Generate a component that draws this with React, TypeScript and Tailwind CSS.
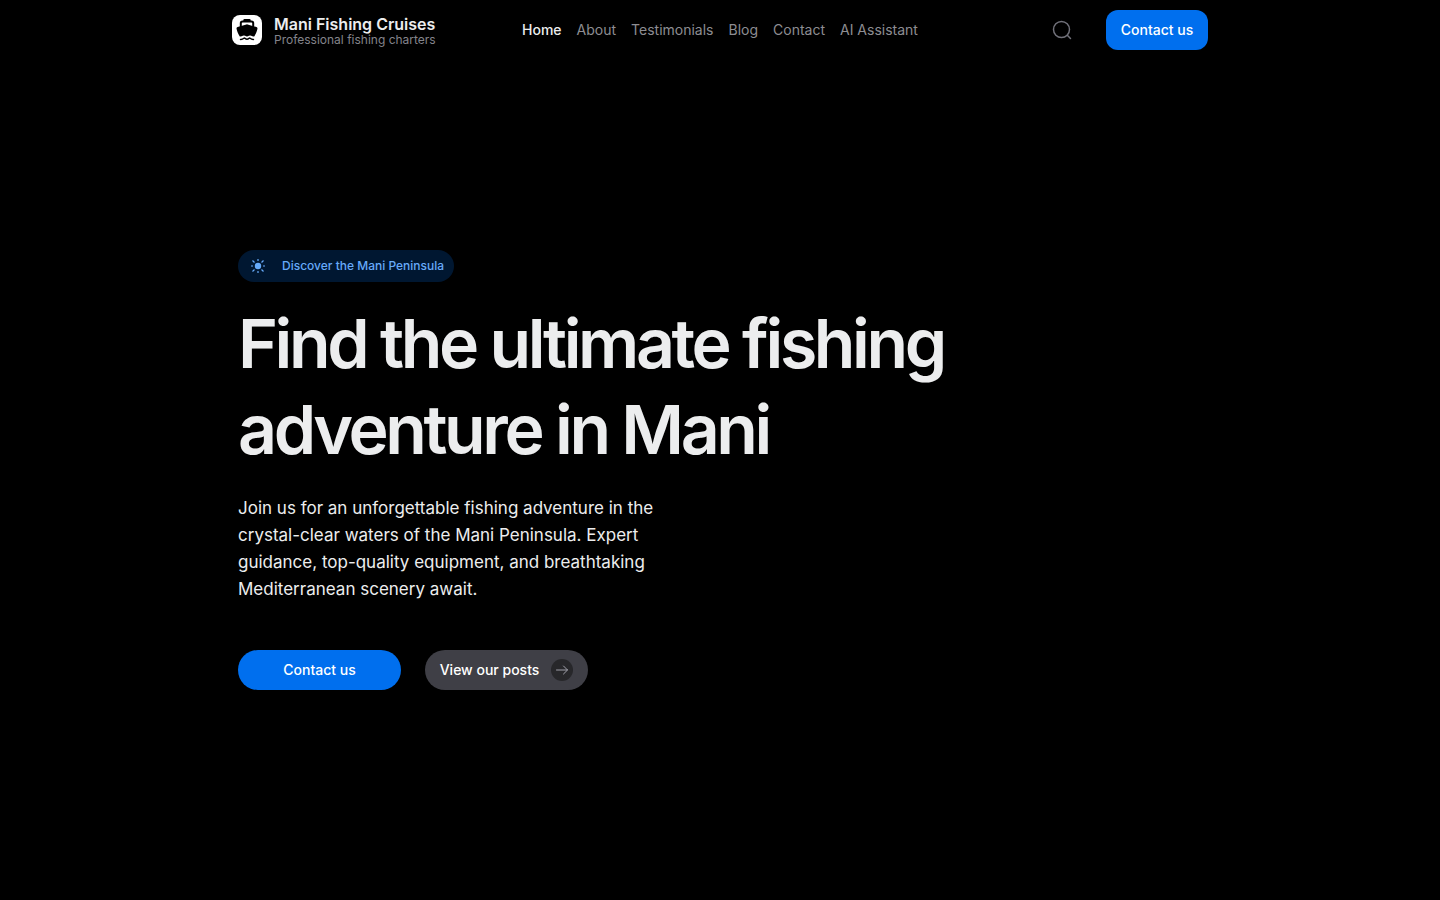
import React from 'react';

interface NavItem {
  label: string;
  href: string;
  active?: boolean;
}

const navItems: NavItem[] = [
  { label: 'Home', href: '#home', active: true },
  { label: 'About', href: '#about' },
  { label: 'Testimonials', href: '#testimonials' },
  { label: 'Blog', href: '#blog' },
  { label: 'Contact', href: '#contact' },
  { label: 'AI Assistant', href: '#assistant' },
];

function BoatIcon() {
  return (
    <svg viewBox="0 0 24 24" className="h-6 w-6" aria-hidden="true">
      {/* funnel and cabin */}
      <path d="M8.300 2.200Q8.300 1 9.500 1h5Q15.700 1 15.700 2.200V3H8.300z" fill="#000" />
      <path d="M5.800 9V5.200Q5.800 3.400 7.600 3.400h8.800Q18.200 3.400 18.200 5.200V9" fill="none" stroke="#000" strokeWidth="2" />
      {/* hull */}
      <path
        d="M11.400 6.400Q12 6.200 12.600 6.400L21.400 9.100Q22.800 9.600 22.400 11C21.800 13.800 20.600 16.400 19.200 18.500Q17.500 18.700 16.200 17.800Q15 17.100 13.900 17.800Q12 19.200 10.100 17.800Q9 17.100 7.800 17.800Q6.500 18.700 4.800 18.500C3.400 16.400 2.200 13.800 1.600 11Q1.200 9.600 2.600 9.100z"
        fill="#000"
      />
      <path
        d="M5.500 21.400Q7.500 21.500 8.800 20.300Q9.400 19.900 10 20.300Q12 22.200 14 20.300Q14.600 19.900 15.200 20.300Q16.500 21.500 18.500 21.400"
        fill="none"
        stroke="#000"
        strokeWidth="1.500"
        strokeLinecap="round"
      />
    </svg>
  );
}

function SearchIcon() {
  return (
    <svg viewBox="0 0 20 20" className="h-5 w-5" fill="none" stroke="currentColor" strokeWidth="1.5" strokeLinecap="round" aria-hidden="true">
      <circle cx="9.5" cy="9.5" r="8" />
      <path d="M15.300 15.300L18.500 18.500" />
    </svg>
  );
}

function SunIcon() {
  return (
    <svg viewBox="0 0 16 16" className="h-4 w-4" fill="none" stroke="currentColor" strokeWidth="1.2" aria-hidden="true">
      <circle cx="8" cy="8" r="3.2" fill="currentColor" stroke="none" />
      <path d="M8 1v2M8 13v2M1 8h2M13 8h2M2.500 2.500l2 2M11.500 11.500l2 2M2.500 13.500l2-2M11.500 4.500l2-2" />
    </svg>
  );
}

function ArrowIcon() {
  return (
    <svg viewBox="0 0 16 16" className="h-4 w-4" fill="none" stroke="currentColor" strokeLinecap="round" strokeLinejoin="round" aria-hidden="true">
      <path d="M2.500 8h11M9.500 4l4 4-4 4" />
    </svg>
  );
}

function Header() {
  return (
    <header className="mx-auto grid h-[60px] w-full max-w-5xl grid-cols-[1fr_auto_1fr] items-center px-6">
      <a href="#home" className="flex items-center gap-3">
        <span className="flex h-[30px] w-[30px] items-center justify-center rounded-lg bg-white">
          <BoatIcon />
        </span>
        <span className="flex flex-col">
          <span className="text-base leading-5 font-semibold text-[#ecedee]">Mani Fishing Cruises</span>
          <span className="text-xs leading-3 text-[#84848b]">Professional fishing charters</span>
        </span>
      </a>
      <nav className="flex items-center gap-[15px] text-sm">
        {navItems.map((item) => (
          <a
            key={item.label}
            href={item.href}
            className={item.active ? 'font-medium text-[#ecedee]' : 'text-[#8d8d92]'}
          >
            {item.label}
          </a>
        ))}
      </nav>
      <div className="flex items-center justify-end gap-[34px]">
        <button type="button" aria-label="Search" className="text-[#71717a]">
          <SearchIcon />
        </button>
        <button type="button" className="h-10 w-[102px] rounded-xl bg-[#006fee] text-sm font-medium text-white">
          Contact us
        </button>
      </div>
    </header>
  );
}

function Hero() {
  return (
    <main className="mx-auto flex w-full max-w-5xl flex-col items-start px-[30px] pt-[190px] pb-[210px]">
      <a href="#about" className="flex h-8 items-center gap-4 rounded-full bg-[#001731] pr-2.5 pl-3 text-xs font-medium text-[#66aaf9]">
        <SunIcon />
        Discover the Mani Peninsula
      </a>
      <h1 className="mt-[18px] max-w-3xl text-[68px] leading-[86px] font-semibold tracking-tighter text-[#ecedee]">
        Find the ultimate fishing adventure in Mani
      </h1>
      <p className="mt-[23px] max-w-md text-[17px] leading-[27px] text-[#ecedee]">
        Join us for an unforgettable fishing adventure in the crystal-clear waters of the Mani Peninsula. Expert
        guidance, top-quality equipment, and breathtaking Mediterranean scenery await.
      </p>
      <div className="mt-[47px] flex items-center gap-6">
        <button type="button" className="h-10 w-[163px] rounded-full bg-[#006fee] text-sm font-medium text-white">
          Contact us
        </button>
        <button
          type="button"
          className="flex h-10 w-[163px] items-center justify-center gap-3 rounded-full bg-[#3f3f46] text-sm font-medium text-white"
        >
          View our posts
          <span className="flex h-[22px] w-[22px] items-center justify-center rounded-full bg-[#27272a] text-[#a1a1aa]">
            <ArrowIcon />
          </span>
        </button>
      </div>
    </main>
  );
}

export default function App() {
  return (
    <div className="min-h-screen bg-black font-['Inter',sans-serif]">
      <Header />
      <Hero />
    </div>
  );
}
